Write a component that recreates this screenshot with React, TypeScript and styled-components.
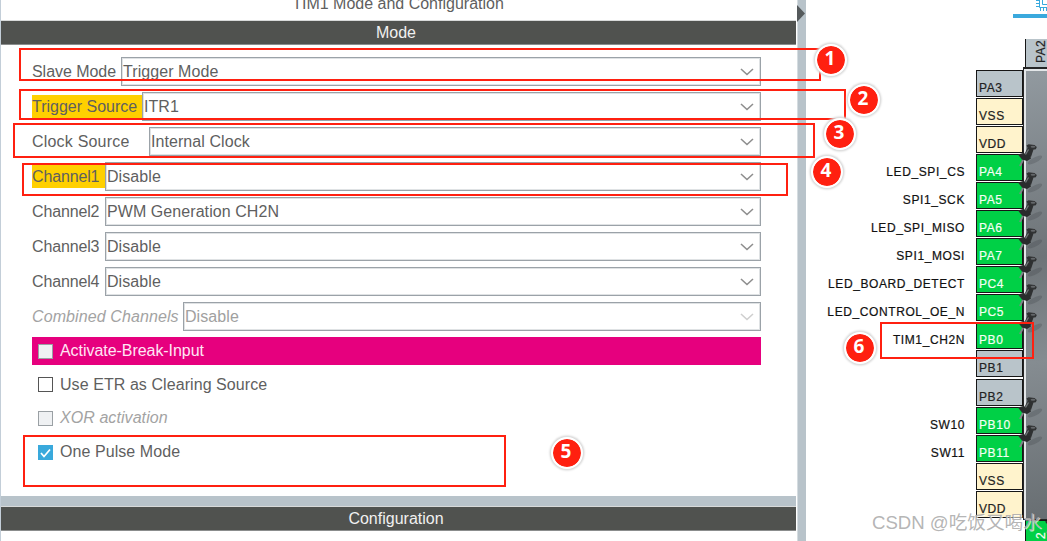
import { FC } from 'react'

import styled, { createGlobalStyle, css } from 'styled-components'

const GlobalStyle = createGlobalStyle`
  * {
    box-sizing: border-box;
  }

  body {
    margin: 0;
    overflow: hidden;
    background: #fff;
    font-family: 'Liberation Sans', Arial, sans-serif;
  }
`

type PinKind = 'free' | 'power' | 'used'

const PIN_COLORS: Record<PinKind, { bg: string; fg: string }> = {
  free: { bg: '#b9c4ca', fg: '#222' },
  power: { bg: '#fff3cc', fg: '#222' },
  used: { bg: '#00d046', fg: '#f4fff4' },
}

const Page = styled.div`
  position: relative;
  display: flex;
  width: 1047px;
  height: 541px;
  overflow: hidden;
  background: #fff;
`

const ConfigPanel = styled.section`
  display: flex;
  flex: none;
  flex-direction: column;
  width: 797px;
  border-left: 1px solid #c3ced8;
  color: #5f5f5f;
  font-size: 16px;
`

const PanelTitle = styled.div`
  height: 26px;
  margin-top: -6px;
  padding-right: 2px;
  line-height: 19px;
  text-align: center;
`

const SectionBar = styled.div`
  height: 25px;
  margin-right: 1px;
  padding-right: 5px;
  border-top: 1px solid #d8dada;
  border-bottom: 1px solid #8b8d8d;
  background: #50524f;
  color: #f0f0f0;
  line-height: 23px;
  text-align: center;
`

const ModeBody = styled.div`
  height: 451px;
  padding: 12px 36px 0 31px;
`

const SectionGap = styled.div`
  height: 10px;
  margin-right: 1px;
  background: #b8c3ca;
`

const FieldRow = styled.div`
  display: flex;
  align-items: center;
  height: 29px;
  margin-bottom: 6px;
`

const FieldLabel = styled.label<{
  $width: number
  $spacing?: number
  $marked?: boolean
  $disabled?: boolean
}>`
  flex: none;
  width: ${({ $width }) => $width}px;
  height: 23px;
  line-height: 23px;
  letter-spacing: ${({ $spacing = 0 }) => $spacing}px;
  white-space: nowrap;
  ${({ $marked }) => $marked && 'background: #ffd000;'}
  ${({ $disabled }) =>
    $disabled &&
    css`
      color: #a3a3a3;
      font-style: italic;
    `}
`

const SelectBox = styled.div<{ $disabled?: boolean }>`
  display: flex;
  flex: 1;
  align-items: center;
  justify-content: space-between;
  height: 29px;
  padding: 0 6px 0 1px;
  border: 1px solid #9ba2a8;
  box-shadow: inset 0 0 0 1px #dfe2e4;
  color: ${({ $disabled }) => ($disabled ? '#a0a0a0' : '#5f5f5f')};
  letter-spacing: 0.07px;
  white-space: nowrap;
`

const CheckRow = styled.div<{ $error?: boolean; $disabled?: boolean }>`
  display: flex;
  align-items: center;
  gap: 7px;
  height: 28px;
  margin-bottom: 5.7px;
  padding-left: 6px;
  letter-spacing: 0.07px;
  ${({ $error }) =>
    $error &&
    css`
      background: #e6007e;
      color: #ffe6f4;
      letter-spacing: -0.05px;
    `}
  ${({ $disabled }) =>
    $disabled &&
    css`
      color: #a3a3a3;
      font-style: italic;
    `}
`

const CheckBox = styled.span<{ $state: 'off' | 'disabled' | 'on' }>`
  display: flex;
  width: 15px;
  height: 15px;
  border: 1px solid
    ${({ $state }) => ({ off: '#555', disabled: '#9aa0a4', on: '#39a9dc' }[$state])};
  background: ${({ $state }) => ({ off: '#fff', disabled: '#eff1f3', on: '#39a9dc' }[$state])};
`

const Divider = styled.div`
  flex: none;
  width: 9px;
  border-left: 1px solid #d5dce0;
  background: #b8c3ca;
`

const Collapse = styled.svg`
  display: block;
  margin-top: 5px;
  margin-left: -1px;
`

const PinoutPanel = styled.section`
  display: flex;
  flex: 1;
  flex-direction: column;
  min-width: 0;
`

const ViewTabs = styled.div`
  display: flex;
  justify-content: flex-end;
  height: 39px;
`

const ViewTab = styled.div`
  width: 34px;
  height: 18px;
  padding-left: 22px;
  overflow: hidden;
  border-bottom: 4px solid #3aa9dd;
`

const ChipView = styled.div`
  display: flex;
  flex: 1;
`

const PinColumn = styled.div`
  flex: none;
  width: 217px;
  padding-top: 30.5px;
`

const PinRow = styled.div`
  position: relative;
  display: flex;
  justify-content: flex-end;
  gap: 11px;
  height: 28.1px;
  color: #111;
  font-size: 12px;
  letter-spacing: 0.6px;
  line-height: 37px;
  -webkit-text-stroke: 0.2px currentColor;
`

const Signal = styled.span`
  white-space: nowrap;
`

const PinBox = styled.span<{ $kind: PinKind }>`
  width: 47px;
  height: 27px;
  padding-left: 2px;
  border: 1px solid #161616;
  background: ${({ $kind }) => PIN_COLORS[$kind].bg};
  color: ${({ $kind }) => PIN_COLORS[$kind].fg};
  line-height: 34px;
`

const PushPin = styled.svg<{ $left: number }>`
  position: absolute;
  top: -12px;
  left: ${({ $left }) => $left}px;
  z-index: 1;
`

const ChipColumn = styled.div`
  display: flex;
  flex: 1;
  flex-direction: column;
  min-width: 0;
`

const EdgePin = styled.div<{ $kind: PinKind; $height: number }>`
  position: relative;
  height: ${({ $height }) => $height}px;
  margin-left: 2px;
  padding-left: 6px;
  border-left: 1px solid #161616;
  ${({ $kind }) => $kind === 'used' && 'border-top: 1px solid #161616;'}
  background: ${({ $kind }) => PIN_COLORS[$kind].bg};
  color: ${({ $kind }) => PIN_COLORS[$kind].fg};
`

const VerticalText = styled.span<{ $offset: number }>`
  display: block;
  padding-bottom: ${({ $offset }) => $offset}px;
  font-size: 12px;
  letter-spacing: 0.4px;
  line-height: 18px;
  writing-mode: vertical-rl;
  transform: rotate(180deg);
  -webkit-text-stroke: 0.2px currentColor;
`

const ChipBody = styled.div`
  height: 453px;
  border: solid #252525;
  border-width: 2px 0 1px 1px;
  box-shadow: inset 2px 2px 0 #e3e6e8;
  background: linear-gradient(170deg, #929aa0 0%, #6e7478 42%, #858c91 65%, #686e72 100%);
`

const Frame = styled.div<{ $x: number; $y: number; $w: number; $h: number }>`
  position: absolute;
  left: ${({ $x }) => $x}px;
  top: ${({ $y }) => $y}px;
  z-index: 2;
  width: ${({ $w }) => $w}px;
  height: ${({ $h }) => $h}px;
  border: 2px solid #ff2010;
`

const Badge = styled.div<{ $x: number; $y: number }>`
  position: absolute;
  left: ${({ $x }) => $x - 16}px;
  top: ${({ $y }) => $y - 16}px;
  z-index: 3;
  width: 32px;
  height: 32px;
  padding-right: 2px;
  border: 2px solid #fff;
  border-radius: 50%;
  background: #ff2010;
  background-clip: padding-box;
  box-shadow: 0 0 2px 1.5px #d9d9d9;
  color: #fff;
  font: bold 19px/25px 'Open Sans', 'Noto Sans', sans-serif;
  text-align: center;
`

const Watermark = styled.div`
  position: absolute;
  left: 872px;
  top: 510px;
  z-index: 4;
  color: rgba(172, 172, 172, 0.9);
  font: 18.6px/26px 'Liberation Sans', 'Noto Sans CJK SC', sans-serif;
  text-shadow: 1px 1px 0 rgba(255, 255, 255, 0.7);
  white-space: nowrap;
`

const fields = [
  { label: 'Slave Mode', value: 'Trigger Mode', width: 89, spacing: -0.05 },
  { label: 'Trigger Source', value: 'ITR1', width: 110, marked: true },
  { label: 'Clock Source', value: 'Internal Clock', width: 117, spacing: 0.2 },
  { label: 'Channel1', value: 'Disable', width: 73, spacing: -0.15, marked: true },
  { label: 'Channel2', value: 'PWM Generation CH2N', width: 73, spacing: -0.15 },
  { label: 'Channel3', value: 'Disable', width: 73, spacing: -0.15 },
  { label: 'Channel4', value: 'Disable', width: 73, spacing: -0.15 },
  { label: 'Combined Channels', value: 'Disable', width: 151, spacing: 0.1, disabled: true },
]

const pins: { name: string; kind: PinKind; signal?: string }[] = [
  { name: 'PA3', kind: 'free' },
  { name: 'VSS', kind: 'power' },
  { name: 'VDD', kind: 'power' },
  { name: 'PA4', kind: 'used', signal: 'LED_SPI_CS' },
  { name: 'PA5', kind: 'used', signal: 'SPI1_SCK' },
  { name: 'PA6', kind: 'used', signal: 'LED_SPI_MISO' },
  { name: 'PA7', kind: 'used', signal: 'SPI1_MOSI' },
  { name: 'PC4', kind: 'used', signal: 'LED_BOARD_DETECT' },
  { name: 'PC5', kind: 'used', signal: 'LED_CONTROL_OE_N' },
  { name: 'PB0', kind: 'used', signal: 'TIM1_CH2N' },
  { name: 'PB1', kind: 'free' },
  { name: 'PB2', kind: 'free' },
  { name: 'PB10', kind: 'used', signal: 'SW10' },
  { name: 'PB11', kind: 'used', signal: 'SW11' },
  { name: 'VSS', kind: 'power' },
  { name: 'VDD', kind: 'power' },
]

const frames = [
  { x: 19, y: 48, w: 802, h: 33 },
  { x: 19, y: 89, w: 827, h: 31 },
  { x: 13, y: 123, w: 802, h: 35 },
  { x: 22, y: 163, w: 766, h: 33 },
  { x: 23, y: 435, w: 483, h: 52 },
  { x: 880, y: 322, w: 154, h: 37 },
]

const badges = [
  { x: 831, y: 60 },
  { x: 864, y: 100 },
  { x: 840, y: 134 },
  { x: 827, y: 172 },
  { x: 567, y: 453 },
  { x: 860, y: 348 },
]

const Chevron: FC<{ disabled?: boolean }> = ({ disabled }) => (
  <svg width='14' height='10' viewBox='0 0 14 10' fill='none'>
    <path d='M1 2l6 5.5L13 2' stroke={disabled ? '#cfcfcf' : '#8e8e8e'} strokeWidth='1.6' />
  </svg>
)

const Tack: FC<{ left?: number }> = ({ left = 210 }) => (
  <PushPin $left={left} width='30' height='30' viewBox='0 0 30 30'>
    <ellipse cx='19' cy='18' rx='8' ry='2.6' fill='#34383b' opacity='.22' transform='rotate(-28 19 18)' />
    <path d='M7.500 17L4 24' stroke='#80868a' strokeWidth='1.8' />
    <path d='M12 5l5.500 2.500L15 15l-6.500-3z' fill='#2e3031' />
    <path d='M2 12.500l5-1.500 7 2.500 1 3-4 2.500-5-1.500z' fill='#2a2c2d' />
    <path d='M10.500 3.500l2-1.200 6 .7 2.300 2-1 2.200-3 .6-5-1.800z' fill='#303233' />
    <ellipse cx='17' cy='4.800' rx='2.400' ry='1' fill='#63676a' />
    <path d='M9.500 12.500l3-5' stroke='#75797b' strokeWidth='1.300' />
  </PushPin>
)

const App: FC = () => {
  return (
    <>
      <GlobalStyle />
      <Page>
        <ConfigPanel>
          <PanelTitle>TIM1 Mode and Configuration</PanelTitle>
          <SectionBar>Mode</SectionBar>
          <ModeBody>
            {fields.map(({ label, value, width, spacing, marked, disabled }) => (
              <FieldRow key={label}>
                <FieldLabel $width={width} $spacing={spacing} $marked={marked} $disabled={disabled}>
                  {label}
                </FieldLabel>
                <SelectBox $disabled={disabled}>
                  {value}
                  <Chevron disabled={disabled} />
                </SelectBox>
              </FieldRow>
            ))}
            <CheckRow $error>
              <CheckBox $state='disabled' />
              Activate-Break-Input
            </CheckRow>
            <CheckRow>
              <CheckBox $state='off' />
              Use ETR as Clearing Source
            </CheckRow>
            <CheckRow $disabled>
              <CheckBox $state='disabled' />
              XOR activation
            </CheckRow>
            <CheckRow>
              <CheckBox $state='on'>
                <svg width='13' height='13' viewBox='0 0 13 13' fill='none'>
                  <path d='M2 7l3 3.500L11 3.500' stroke='#fff' strokeWidth='1.700' />
                </svg>
              </CheckBox>
              One Pulse Mode
            </CheckRow>
          </ModeBody>
          <SectionGap />
          <SectionBar>Configuration</SectionBar>
        </ConfigPanel>
        <Divider>
          <Collapse width='9' height='18' viewBox='0 0 9 18'>
            <path d='M0 0l8 8.500L0 17z' fill='#555a5c' />
          </Collapse>
        </Divider>
        <PinoutPanel>
          <ViewTabs>
            <ViewTab>
              <svg width='16' height='14' viewBox='0 0 16 14' fill='none' stroke='#3aa9dd'>
                <path d='M4.500 0v7.500H16M7.500 0v4.500H16M1 0.500h3M1 3.500h3M1 6.500h3M5.500 8v3M8.500 8v3M11.500 8v3' />
              </svg>
            </ViewTab>
          </ViewTabs>
          <ChipView>
            <PinColumn>
              {pins.map(({ name, kind, signal }, i) => (
                <PinRow key={i}>
                  {signal && <Signal>{signal}</Signal>}
                  <PinBox $kind={kind}>{name}</PinBox>
                  {signal && <Tack />}
                </PinRow>
              ))}
            </PinColumn>
            <ChipColumn>
              <EdgePin $kind='free' $height={28}>
                <VerticalText $offset={1}>PA2</VerticalText>
              </EdgePin>
              <ChipBody />
              <EdgePin $kind='used' $height={21}>
                <VerticalText $offset={11}>2</VerticalText>
                <Tack left={17} />
              </EdgePin>
            </ChipColumn>
          </ChipView>
        </PinoutPanel>
        {frames.map(({ x, y, w, h }) => (
          <Frame key={y} $x={x} $y={y} $w={w} $h={h} />
        ))}
        {badges.map(({ x, y }, i) => (
          <Badge key={i} $x={x} $y={y}>
            {i + 1}
          </Badge>
        ))}
        <Watermark>CSDN @吃饭又喝水</Watermark>
      </Page>
    </>
  )
}

export default App
